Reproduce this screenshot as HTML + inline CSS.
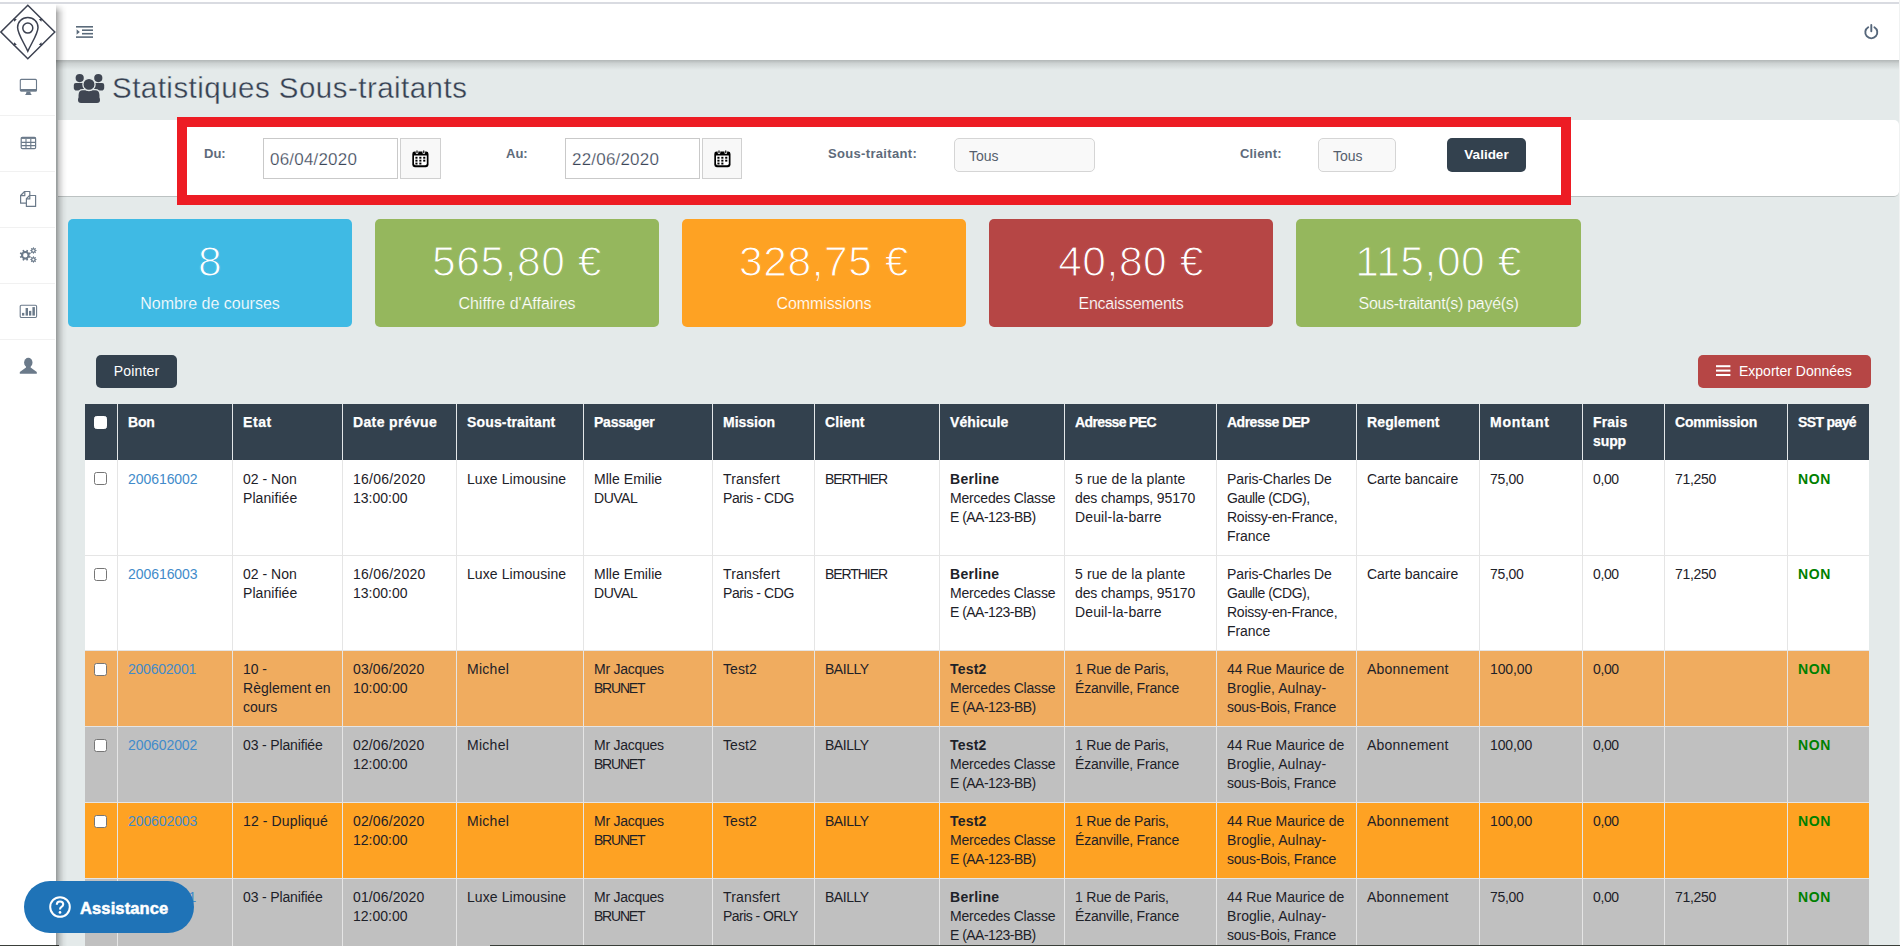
<!DOCTYPE html>
<html lang="fr">
<head>
<meta charset="utf-8">
<title>Statistiques Sous-traitants</title>
<style>
*{box-sizing:border-box;margin:0;padding:0}
html,body{width:1900px;height:946px;overflow:hidden}
body{font-family:"Liberation Sans",sans-serif;background:#e4eaea;color:#1d2128;font-size:14px;position:relative}
.abs{position:absolute}
/* top strip */
#topwhite{left:0;top:0;width:1900px;height:3px;background:#fff}
#topline{left:0;top:2px;width:1900px;height:2px;background:#d9dbe1}
/* topbar */
#topbar{left:56px;top:3px;width:1843px;height:57px;background:#fff}
#topshadow{left:56px;top:60px;width:1843px;height:10px;background:linear-gradient(to bottom,rgba(0,0,0,.22),rgba(0,0,0,.10) 35%,rgba(0,0,0,0))}
/* sidebar */
#sidebar{left:0;top:3px;width:56px;height:943px;background:#fff}
#sideshadow{z-index:5;left:56px;top:4px;width:11px;height:942px;-webkit-mask-image:linear-gradient(to bottom,transparent 0,#000 9px);mask-image:linear-gradient(to bottom,transparent 0,#000 9px);background:linear-gradient(to right,rgba(0,0,0,.34),rgba(0,0,0,.16) 35%,rgba(0,0,0,.04) 70%,rgba(0,0,0,0))}
.sdiv{left:0;width:55px;height:1px;background:#f1f1f1}
#rightstrip{left:1899px;top:0;width:1px;height:946px;background:#f0f2f2}
/* title */
#title{left:112px;top:68px;font-size:29.5px;line-height:40px;color:#364152;white-space:nowrap;letter-spacing:.47px;-webkit-text-stroke:.35px #e4eaea}
/* filter panel */
#panel{left:58px;top:120px;width:1841px;height:77px;background:#fff;border-radius:0 5px 5px 0;border-bottom:1px solid #bcc2c2}
#red{left:177px;top:117px;width:1394px;height:88px;border:10px solid #ed1c24}
.flabel{font-weight:bold;font-size:13px;color:#5e6b7b;line-height:16px;white-space:nowrap}
.dinput{height:41px;width:135px;border:1px solid #c9c9c9;background:#fff;top:138px}
.dinput span{position:absolute;left:6px;top:10px;font-size:17px;line-height:22px;color:#3b4658;-webkit-text-stroke:.25px #fff;white-space:nowrap;letter-spacing:.2px}
.calbtn{top:138px;width:41px;height:41px;border:1px solid #d0d0d0;background:#f8f8f8}
.sel{top:138px;height:34px;border:1px solid #d5d5d5;border-radius:5px;background:#f9f9f9}
.sel span{position:absolute;left:14px;top:8px;font-size:14px;line-height:18px;color:#555f6d}
.btn{border-radius:5px;color:#fff;font-size:14px;white-space:nowrap}
/* cards */
.card{position:absolute;top:219px;height:108px;border-radius:5px;color:#fff;text-align:center}
.card .num{position:absolute;left:0;right:0;top:19px;font-size:42.5px;line-height:48px;-webkit-text-stroke:1.1px #000;white-space:nowrap;letter-spacing:.55px}
.card .lbl{position:absolute;left:0;right:0;top:75px;font-size:16px;line-height:20px;-webkit-text-stroke:.2px #000;white-space:nowrap}
/* table */
#tbl{left:85px;top:404px;width:1784px;border-collapse:separate;border-spacing:0;table-layout:fixed;font-size:14px;line-height:19px}
#tbl th{background:#33414e;color:#fff;font-weight:bold;-webkit-text-stroke:.25px #fff;text-align:left;vertical-align:top;padding:9px 4px 0 10px;border-left:1px solid #e3e6e8;white-space:nowrap;overflow:hidden}
#tbl td{vertical-align:top;padding:9px 0 0 10px;border-left:1px solid #e5e5e5;border-top:1px solid #e5e5e5;white-space:nowrap;overflow:hidden}
#tbl th.cb,#tbl td.cb{border-left:none;padding:0;position:relative}
#tbl tbody tr:first-child td{border-top:none;padding-top:10px}
tr.w td{background:#fff}
tr.o1 td{background:#f0ac5f}
tr.g td{background:#c0c0c0}
tr.o2 td{background:#fea223}
#tbl a{color:#428bca}
.non{color:#008000;font-weight:bold}
.chk{position:absolute;left:9px;top:12px;width:13px;height:13px;border:1px solid #767676;border-radius:2.5px;background:#fff}
.chk.h{border-color:#fff;top:11.6px;left:9.4px}
/* assistance */
#assist{z-index:10;left:24px;top:881px;width:170px;height:52px;border-radius:26px;background:#1f73b7}
#assist span{position:absolute;left:56px;top:17px;letter-spacing:.12px;font-size:16.5px;line-height:20px;font-weight:bold;color:#fff;-webkit-text-stroke:.5px #fff}
.bl{top:945px;height:1px;background:#3a3f3a}
</style>
</head>
<body>
<div class="abs" id="topwhite"></div>
<div class="abs" id="topbar"></div>
<div class="abs" id="topshadow"></div>
<div class="abs" id="sidebar"></div>
<div class="abs" id="sideshadow"></div>
<div class="abs" id="topline"></div>
<div class="abs" id="rightstrip"></div>

<!-- logo -->
<svg class="abs" style="left:0;top:4px" width="56" height="56" viewBox="0 0 56 56">
 <g fill="none" stroke="#3c4150" stroke-width="1.5" stroke-linejoin="miter">
  <path d="M27.8 1.2 L54.8 28 L27.8 54.8 L0.9 28 Z"/>
  <path d="M27.8 13.6 C21.8 13.6 17.6 18 17.6 23.4 C17.6 29.5 23.8 38.5 27.8 47.2 C31.8 38.5 38 29.5 38 23.4 C38 18 33.8 13.6 27.8 13.6 Z"/>
  <circle cx="27.8" cy="24.1" r="5"/>
 </g>
 <g fill="#3c4150">
  <path d="M13.4 14.4 l3.4 0.9 l-2.5 2.5 z"/>
  <path d="M42.2 14.4 l-3.4 0.9 l2.5 2.5 z"/>
  <path d="M13.4 41.6 l3.4 -0.9 l-2.5 -2.5 z"/>
  <path d="M42.2 41.6 l-3.4 -0.9 l2.5 -2.5 z"/>
 </g>
</svg>

<!-- hamburger -->
<svg class="abs" style="left:76px;top:26px" width="17" height="12" viewBox="0 0 17 12">
 <g fill="#5a6a7a">
  <rect x="0" y="0" width="17" height="1.6"/>
  <rect x="6" y="3.4" width="11" height="1.6"/>
  <rect x="6" y="6.9" width="11" height="1.6"/>
  <rect x="0" y="10.3" width="17" height="1.6"/>
  <path d="M0.6 3.2 L3.8 6 L0.6 8.8 Z"/>
 </g>
</svg>

<!-- power -->
<svg class="abs" style="left:1863px;top:23px" width="17" height="18" viewBox="0 0 17 18">
 <g fill="none" stroke="#56677b" stroke-width="1.9" stroke-linecap="round">
  <path d="M5.2 4.2 A6 6 0 1 0 11.4 4.2"/>
  <path d="M8.3 2 V8.2"/>
 </g>
</svg>

<!-- sidebar icons -->
<div class="abs sdiv" style="top:115px"></div>
<div class="abs sdiv" style="top:171px"></div>
<div class="abs sdiv" style="top:227px"></div>
<div class="abs sdiv" style="top:283px"></div>
<div class="abs sdiv" style="top:339px"></div>

<!-- desktop -->
<svg class="abs" style="left:19px;top:78px" width="19" height="18" viewBox="0 0 19 18">
 <rect x="1.3" y="1.4" width="16.2" height="11.6" rx="1" fill="none" stroke="#6b7a8a" stroke-width="1.1"/>
 <rect x="1.3" y="11" width="16.2" height="2.4" fill="#6b7a8a"/>
 <path d="M7.6 13.4 H11.2 L12 16.6 H6.8 Z" fill="#6b7a8a"/>
 <rect x="6.4" y="16" width="6" height="1" fill="#6b7a8a"/>
</svg>
<!-- table -->
<svg class="abs" style="left:20px;top:136px" width="17" height="14" viewBox="0 0 17 14">
 <rect x="1.2" y="1.3" width="14.4" height="11.4" rx="1.2" fill="none" stroke="#6b7a8a" stroke-width="1.2"/>
 <rect x="1.2" y="1.3" width="14.4" height="1.6" fill="#6b7a8a"/>
 <path d="M1.2 6.4 H15.6 M1.2 9.6 H15.6 M6 3 V12.7 M10.8 3 V12.7" stroke="#6b7a8a" stroke-width="1.1" fill="none"/>
</svg>
<!-- files -->
<svg class="abs" style="left:19px;top:190px" width="19" height="18" viewBox="0 0 19 18">
 <g fill="#fff" stroke="#6b7a8a" stroke-width="1.2" stroke-linejoin="round">
  <path d="M5.6 1.5 H10.8 V13.2 H1.6 V5.5 Z"/>
  <path d="M5.8 1.7 V5.7 H1.8" fill="none"/>
  <path d="M10.6 5.5 H16.6 V16.4 H7.4 V8.7 Z"/>
  <path d="M10.8 5.7 V8.9 H7.6" fill="none"/>
 </g>
</svg>
<!-- cogs -->
<svg class="abs" style="left:19px;top:246px" width="19" height="18" viewBox="0 0 19 18">
 <g fill="#6b7a8a" fill-rule="evenodd">
  <path d="M10.52 10.01 L11.82 10.61 L11.20 12.11 L9.86 11.62 L8.72 12.76 L9.21 14.10 L7.71 14.72 L7.11 13.42 L5.49 13.42 L4.89 14.72 L3.39 14.10 L3.88 12.76 L2.74 11.62 L1.40 12.11 L0.78 10.61 L2.08 10.01 L2.08 8.39 L0.78 7.79 L1.40 6.29 L2.74 6.78 L3.88 5.64 L3.39 4.30 L4.89 3.68 L5.49 4.98 L7.11 4.98 L7.71 3.68 L9.21 4.30 L8.72 5.64 L9.86 6.78 L11.20 6.29 L11.82 7.79 L10.52 8.39 Z M4.10 9.20 a2.20 2.20 0 1 0 4.40 0 a2.20 2.20 0 1 0 -4.40 0 Z"/>
  <path d="M16.75 4.13 L17.67 4.15 L17.67 5.05 L16.75 5.07 L16.40 5.93 L17.03 6.59 L16.39 7.23 L15.73 6.60 L14.87 6.95 L14.85 7.87 L13.95 7.87 L13.93 6.95 L13.07 6.60 L12.41 7.23 L11.77 6.59 L12.40 5.93 L12.05 5.07 L11.13 5.05 L11.13 4.15 L12.05 4.13 L12.40 3.27 L11.77 2.61 L12.41 1.97 L13.07 2.60 L13.93 2.25 L13.95 1.33 L14.85 1.33 L14.87 2.25 L15.73 2.60 L16.39 1.97 L17.03 2.61 L16.40 3.27 Z M13.30 4.60 a1.10 1.10 0 1 0 2.20 0 a1.10 1.10 0 1 0 -2.20 0 Z"/>
  <path d="M16.75 13.13 L17.67 13.15 L17.67 14.05 L16.75 14.07 L16.40 14.93 L17.03 15.59 L16.39 16.23 L15.73 15.60 L14.87 15.95 L14.85 16.87 L13.95 16.87 L13.93 15.95 L13.07 15.60 L12.41 16.23 L11.77 15.59 L12.40 14.93 L12.05 14.07 L11.13 14.05 L11.13 13.15 L12.05 13.13 L12.40 12.27 L11.77 11.61 L12.41 10.97 L13.07 11.60 L13.93 11.25 L13.95 10.33 L14.85 10.33 L14.87 11.25 L15.73 11.60 L16.39 10.97 L17.03 11.61 L16.40 12.27 Z M13.30 13.60 a1.10 1.10 0 1 0 2.20 0 a1.10 1.10 0 1 0 -2.20 0 Z"/>
 </g>
</svg>
<!-- bar chart -->
<svg class="abs" style="left:19px;top:304px" width="19" height="15" viewBox="0 0 19 15">
 <rect x="1.2" y="1.3" width="16.4" height="12.2" rx="1.2" fill="none" stroke="#6b7a8a" stroke-width="1.1"/>
 <g fill="#6b7a8a">
  <rect x="3" y="8.9" width="2.3" height="2.7"/>
  <rect x="6.6" y="4" width="2.4" height="7.6"/>
  <rect x="10" y="6.9" width="2.3" height="4.7"/>
  <rect x="13.4" y="3.1" width="2.5" height="8.5"/>
 </g>
</svg>
<!-- user -->
<svg class="abs" style="left:19px;top:357px" width="19" height="18" viewBox="0 0 19 18">
 <g fill="#6b7a8a">
  <ellipse cx="9.3" cy="5.6" rx="4.2" ry="4.9"/>
  <path d="M7 8.6 H11.6 V10.6 L17.8 14.9 V16.8 H0.8 V14.9 L7 10.6 Z"/>
 </g>
</svg>

<!-- title -->
<svg class="abs" style="left:73px;top:73px" width="32" height="31" viewBox="0 0 32 31">
 <g fill="#3f4652">
  <circle cx="6.7" cy="5.1" r="4.1"/>
  <circle cx="25.3" cy="5.1" r="4.1"/>
  <path d="M0.8 12 Q0.8 10 2.8 10 H11 V17.6 H3.6 Q0.8 17.6 0.8 14.8 Z"/>
  <path d="M31.2 12 Q31.2 10 29.2 10 H21 V17.6 H28.4 Q31.2 17.6 31.2 14.8 Z"/>
  <path d="M5 22 Q5 16.6 9.8 16.6 H22.2 Q27 16.6 27 22 V25.6 Q27 29.8 22.8 29.8 H9.2 Q5 29.8 5 25.6 Z" stroke="#e4eaea" stroke-width="1.1"/>
  <rect x="5" y="24" width="22" height="6" rx="3" />
  <circle cx="16" cy="11.4" r="6.1" stroke="#e4eaea" stroke-width="1.3"/>
 </g>
</svg>
<div class="abs" id="title">Statistiques Sous-traitants</div>

<!-- filter panel -->
<div class="abs" id="panel"></div>
<div class="abs flabel" style="left:204px;top:146px">Du:</div>
<div class="abs dinput" style="left:263px"><span>06/04/2020</span></div>
<div class="abs calbtn" style="left:400px"><svg class="abs" style="left:10px;top:10px" width="18" height="19" viewBox="0 0 18 19"><rect x="1.3" y="2.6" width="16.2" height="15.6" rx="2.4" fill="#000"/>
   <path d="M3 6.6 H15.8 V14.6 Q15.8 16.2 14.2 16.2 H4.6 Q3 16.2 3 14.6 Z" fill="#fff"/>
   <rect x="4.7" y="0.9" width="2.6" height="4" rx="1.2" fill="#fff"/>
   <rect x="11.5" y="0.9" width="2.6" height="4" rx="1.2" fill="#fff"/>
   <rect x="5.4" y="1.3" width="1.2" height="3" rx=".6" fill="#000"/>
   <rect x="12.2" y="1.3" width="1.2" height="3" rx=".6" fill="#000"/>
   <g fill="#000">
    <rect x="4.4" y="7.8" width="2.1" height="1.9"/><rect x="8.3" y="7.8" width="2.1" height="1.9"/><rect x="12.2" y="7.8" width="2.1" height="1.9"/>
    <rect x="4.4" y="10.7" width="2.1" height="1.9"/><rect x="8.3" y="10.7" width="2.1" height="1.9"/><rect x="12.2" y="10.7" width="2.1" height="1.9"/>
    <rect x="4.4" y="13.6" width="2.1" height="1.9"/><rect x="8.3" y="13.6" width="2.1" height="1.9"/>
   </g></svg></div>
<div class="abs flabel" style="left:506px;top:146px">Au:</div>
<div class="abs dinput" style="left:565px"><span>22/06/2020</span></div>
<div class="abs calbtn" style="left:702px;width:40px"><svg class="abs" style="left:10px;top:10px" width="18" height="19" viewBox="0 0 18 19"><rect x="1.3" y="2.6" width="16.2" height="15.6" rx="2.4" fill="#000"/>
   <path d="M3 6.6 H15.8 V14.6 Q15.8 16.2 14.2 16.2 H4.6 Q3 16.2 3 14.6 Z" fill="#fff"/>
   <rect x="4.7" y="0.9" width="2.6" height="4" rx="1.2" fill="#fff"/>
   <rect x="11.5" y="0.9" width="2.6" height="4" rx="1.2" fill="#fff"/>
   <rect x="5.4" y="1.3" width="1.2" height="3" rx=".6" fill="#000"/>
   <rect x="12.2" y="1.3" width="1.2" height="3" rx=".6" fill="#000"/>
   <g fill="#000">
    <rect x="4.4" y="7.8" width="2.1" height="1.9"/><rect x="8.3" y="7.8" width="2.1" height="1.9"/><rect x="12.2" y="7.8" width="2.1" height="1.9"/>
    <rect x="4.4" y="10.7" width="2.1" height="1.9"/><rect x="8.3" y="10.7" width="2.1" height="1.9"/><rect x="12.2" y="10.7" width="2.1" height="1.9"/>
    <rect x="4.4" y="13.6" width="2.1" height="1.9"/><rect x="8.3" y="13.6" width="2.1" height="1.9"/>
   </g></svg></div>
<div class="abs flabel" style="left:828px;top:146px;letter-spacing:.33px">Sous-traitant:</div>
<div class="abs sel" style="left:954px;width:141px"><span>Tous</span></div>
<div class="abs flabel" style="left:1240px;top:146px;letter-spacing:.18px">Client:</div>
<div class="abs sel" style="left:1318px;width:78px"><span>Tous</span></div>
<div class="abs btn" style="left:1447px;top:138px;width:79px;height:34px;background:#33414e;text-align:center;line-height:33px;font-weight:bold;font-size:13.5px">Valider</div>
<div class="abs" id="red"></div>


<!-- cards -->
<div class="card" style="left:68px;width:284px;background:#3fbae4"><div class="num" style="-webkit-text-stroke-color:#3fbae4">8</div><div class="lbl" style="-webkit-text-stroke-color:#3fbae4;letter-spacing:0px">Nombre de courses</div></div>
<div class="card" style="left:375px;width:284px;background:#95b75d"><div class="num" style="-webkit-text-stroke-color:#95b75d">565,80 €</div><div class="lbl" style="-webkit-text-stroke-color:#95b75d;letter-spacing:0px">Chiffre d'Affaires</div></div>
<div class="card" style="left:682px;width:284px;background:#fea223"><div class="num" style="-webkit-text-stroke-color:#fea223">328,75 €</div><div class="lbl" style="-webkit-text-stroke-color:#fea223;letter-spacing:-0.1px">Commissions</div></div>
<div class="card" style="left:989px;width:284px;background:#b64645"><div class="num" style="-webkit-text-stroke-color:#b64645">40,80 €</div><div class="lbl" style="-webkit-text-stroke-color:#b64645;letter-spacing:-0.28px">Encaissements</div></div>
<div class="card" style="left:1296px;width:285px;background:#95b75d"><div class="num" style="-webkit-text-stroke-color:#95b75d">115,00 €</div><div class="lbl" style="-webkit-text-stroke-color:#95b75d;letter-spacing:-0.3px">Sous-traitant(s) payé(s)</div></div>

<!-- buttons -->
<div class="abs btn" style="left:96px;top:355px;width:81px;height:33px;background:#33414e;text-align:center;line-height:32px;letter-spacing:.15px">Pointer</div>
<div class="abs btn" style="left:1698px;top:355px;width:173px;height:33px;background:#b64645;line-height:32px">
 <svg class="abs" style="left:18px;top:10px" width="15" height="12" viewBox="0 0 15 12"><g fill="#fff"><rect x="0" y="0.2" width="14.4" height="2"/><rect x="0" y="4.6" width="14.4" height="2"/><rect x="0" y="9" width="14.4" height="2"/></g></svg>
 <span class="abs" style="left:41px;top:0">Exporter Données</span>
</div>

<!-- table -->
<table class="abs" id="tbl">
<colgroup><col style="width:32px"><col style="width:115px"><col style="width:110px"><col style="width:114px"><col style="width:127px"><col style="width:129px"><col style="width:102px"><col style="width:125px"><col style="width:125px"><col style="width:152px"><col style="width:140px"><col style="width:123px"><col style="width:103px"><col style="width:82px"><col style="width:123px"><col style="width:82px"></colgroup>
<thead><tr style="height:56px"><th class="cb"><span class="chk h"></span></th><th><span style="letter-spacing:-0.15px">Bon</span></th><th><span style="letter-spacing:0.6px">Etat</span></th><th><span style="letter-spacing:0.36px">Date prévue</span></th><th><span style="letter-spacing:0.16px">Sous-traitant</span></th><th><span style="letter-spacing:-0.23px">Passager</span></th><th><span>Mission</span></th><th><span style="letter-spacing:0.12px">Client</span></th><th><span style="letter-spacing:0.1px">Véhicule</span></th><th><span style="letter-spacing:-0.63px">Adresse PEC</span></th><th><span style="letter-spacing:-0.5px">Adresse DEP</span></th><th><span style="letter-spacing:0.12px">Reglement</span></th><th><span style="letter-spacing:0.75px">Montant</span></th><th><span style="letter-spacing:0.18px">Frais</span><br><span style="letter-spacing:-0.1px">supp</span></th><th><span style="letter-spacing:-0.2px">Commission</span></th><th><span style="letter-spacing:-0.63px">SST payé</span></th></tr></thead>
<tbody>
<tr class="w" style="height:95px"><td class="cb"><span class="chk"></span></td><td><a><span style="letter-spacing:-0.06px">200616002</span></a></td><td><span style="letter-spacing:0.01px">02 - Non</span><br><span style="letter-spacing:0.06px">Planifiée</span></td><td><span style="letter-spacing:0.24px">16/06/2020</span><br><span style="letter-spacing:0.01px">13:00:00</span></td><td><span style="letter-spacing:0.08px">Luxe Limousine</span></td><td><span style="letter-spacing:0.04px">Mlle Emilie</span><br><span style="letter-spacing:-0.47px">DUVAL</span></td><td><span style="letter-spacing:0.16px">Transfert</span><br><span style="letter-spacing:-0.41px">Paris - CDG</span></td><td><span style="letter-spacing:-1.07px">BERTHIER</span></td><td><b style="letter-spacing:0.27px">Berline</b><br><span style="letter-spacing:-0.19px">Mercedes Classe</span><br><span style="letter-spacing:-0.53px">E (AA-123-BB)</span></td><td><span style="letter-spacing:0.12px">5 rue de la plante</span><br><span style="letter-spacing:-0.12px">des champs, 95170</span><br><span style="letter-spacing:0.14px">Deuil-la-barre</span></td><td><span style="letter-spacing:-0.12px">Paris-Charles De</span><br><span style="letter-spacing:-0.46px">Gaulle (CDG),</span><br><span style="letter-spacing:-0.24px">Roissy-en-France,</span><br><span style="letter-spacing:-0.06px">France</span></td><td><span style="letter-spacing:-0.05px">Carte bancaire</span></td><td><span style="letter-spacing:-0.32px">75,00</span></td><td><span style="letter-spacing:-0.37px">0,00</span></td><td><span style="letter-spacing:-0.3px">71,250</span></td><td class="non"><span style="letter-spacing:0.6px">NON</span></td></tr>
<tr class="w" style="height:95px"><td class="cb"><span class="chk"></span></td><td><a><span style="letter-spacing:-0.06px">200616003</span></a></td><td><span style="letter-spacing:0.01px">02 - Non</span><br><span style="letter-spacing:0.06px">Planifiée</span></td><td><span style="letter-spacing:0.24px">16/06/2020</span><br><span style="letter-spacing:0.01px">13:00:00</span></td><td><span style="letter-spacing:0.08px">Luxe Limousine</span></td><td><span style="letter-spacing:0.04px">Mlle Emilie</span><br><span style="letter-spacing:-0.47px">DUVAL</span></td><td><span style="letter-spacing:0.16px">Transfert</span><br><span style="letter-spacing:-0.41px">Paris - CDG</span></td><td><span style="letter-spacing:-1.07px">BERTHIER</span></td><td><b style="letter-spacing:0.27px">Berline</b><br><span style="letter-spacing:-0.19px">Mercedes Classe</span><br><span style="letter-spacing:-0.53px">E (AA-123-BB)</span></td><td><span style="letter-spacing:0.12px">5 rue de la plante</span><br><span style="letter-spacing:-0.12px">des champs, 95170</span><br><span style="letter-spacing:0.14px">Deuil-la-barre</span></td><td><span style="letter-spacing:-0.12px">Paris-Charles De</span><br><span style="letter-spacing:-0.46px">Gaulle (CDG),</span><br><span style="letter-spacing:-0.24px">Roissy-en-France,</span><br><span style="letter-spacing:-0.06px">France</span></td><td><span style="letter-spacing:-0.05px">Carte bancaire</span></td><td><span style="letter-spacing:-0.32px">75,00</span></td><td><span style="letter-spacing:-0.37px">0,00</span></td><td><span style="letter-spacing:-0.3px">71,250</span></td><td class="non"><span style="letter-spacing:0.6px">NON</span></td></tr>
<tr class="o1" style="height:76px"><td class="cb"><span class="chk"></span></td><td><a><span style="letter-spacing:-0.23px">200602001</span></a></td><td><span style="letter-spacing:-0.07px">10 -</span><br><span style="letter-spacing:0.04px">Règlement en</span><br><span style="letter-spacing:0.02px">cours</span></td><td><span style="letter-spacing:0.13px">03/06/2020</span><br><span style="letter-spacing:0.01px">10:00:00</span></td><td><span style="letter-spacing:0.28px">Michel</span></td><td><span style="letter-spacing:-0.27px">Mr Jacques</span><br><span style="letter-spacing:-1.22px">BRUNET</span></td><td><span style="letter-spacing:0.05px">Test2</span></td><td><span style="letter-spacing:-0.48px">BAILLY</span></td><td><b style="letter-spacing:0.2px">Test2</b><br><span style="letter-spacing:-0.19px">Mercedes Classe</span><br><span style="letter-spacing:-0.53px">E (AA-123-BB)</span></td><td><span style="letter-spacing:-0.19px">1 Rue de Paris,</span><br><span style="letter-spacing:-0.2px">Ézanville, France</span></td><td><span style="letter-spacing:-0.06px">44 Rue Maurice de</span><br><span style="letter-spacing:0.07px">Broglie, Aulnay-</span><br><span style="letter-spacing:-0.22px">sous-Bois, France</span></td><td><span style="letter-spacing:0.23px">Abonnement</span></td><td><span style="letter-spacing:-0.12px">100,00</span></td><td><span style="letter-spacing:-0.37px">0,00</span></td><td></td><td class="non"><span style="letter-spacing:0.6px">NON</span></td></tr>
<tr class="g" style="height:76px"><td class="cb"><span class="chk"></span></td><td><a><span style="letter-spacing:-0.09px">200602002</span></a></td><td><span style="letter-spacing:-0.15px">03 - Planifiée</span></td><td><span style="letter-spacing:0.13px">02/06/2020</span><br><span style="letter-spacing:0.01px">12:00:00</span></td><td><span style="letter-spacing:0.28px">Michel</span></td><td><span style="letter-spacing:-0.27px">Mr Jacques</span><br><span style="letter-spacing:-1.22px">BRUNET</span></td><td><span style="letter-spacing:0.05px">Test2</span></td><td><span style="letter-spacing:-0.48px">BAILLY</span></td><td><b style="letter-spacing:0.2px">Test2</b><br><span style="letter-spacing:-0.19px">Mercedes Classe</span><br><span style="letter-spacing:-0.53px">E (AA-123-BB)</span></td><td><span style="letter-spacing:-0.19px">1 Rue de Paris,</span><br><span style="letter-spacing:-0.2px">Ézanville, France</span></td><td><span style="letter-spacing:-0.06px">44 Rue Maurice de</span><br><span style="letter-spacing:0.07px">Broglie, Aulnay-</span><br><span style="letter-spacing:-0.22px">sous-Bois, France</span></td><td><span style="letter-spacing:0.23px">Abonnement</span></td><td><span style="letter-spacing:-0.12px">100,00</span></td><td><span style="letter-spacing:-0.37px">0,00</span></td><td></td><td class="non"><span style="letter-spacing:0.6px">NON</span></td></tr>
<tr class="o2" style="height:76px"><td class="cb"><span class="chk"></span></td><td><a><span style="letter-spacing:-0.09px">200602003</span></a></td><td><span style="letter-spacing:0.12px">12 - Dupliqué</span></td><td><span style="letter-spacing:0.13px">02/06/2020</span><br><span style="letter-spacing:0.01px">12:00:00</span></td><td><span style="letter-spacing:0.28px">Michel</span></td><td><span style="letter-spacing:-0.27px">Mr Jacques</span><br><span style="letter-spacing:-1.22px">BRUNET</span></td><td><span style="letter-spacing:0.05px">Test2</span></td><td><span style="letter-spacing:-0.48px">BAILLY</span></td><td><b style="letter-spacing:0.2px">Test2</b><br><span style="letter-spacing:-0.19px">Mercedes Classe</span><br><span style="letter-spacing:-0.53px">E (AA-123-BB)</span></td><td><span style="letter-spacing:-0.19px">1 Rue de Paris,</span><br><span style="letter-spacing:-0.2px">Ézanville, France</span></td><td><span style="letter-spacing:-0.06px">44 Rue Maurice de</span><br><span style="letter-spacing:0.07px">Broglie, Aulnay-</span><br><span style="letter-spacing:-0.22px">sous-Bois, France</span></td><td><span style="letter-spacing:0.23px">Abonnement</span></td><td><span style="letter-spacing:-0.12px">100,00</span></td><td><span style="letter-spacing:-0.37px">0,00</span></td><td></td><td class="non"><span style="letter-spacing:0.6px">NON</span></td></tr>
<tr class="g" style="height:76px"><td class="cb"><span class="chk"></span></td><td><a><span style="letter-spacing:-0.23px">200601001</span></a></td><td><span style="letter-spacing:-0.15px">03 - Planifiée</span></td><td><span style="letter-spacing:0.13px">01/06/2020</span><br><span style="letter-spacing:0.01px">12:00:00</span></td><td><span style="letter-spacing:0.08px">Luxe Limousine</span></td><td><span style="letter-spacing:-0.27px">Mr Jacques</span><br><span style="letter-spacing:-1.22px">BRUNET</span></td><td><span style="letter-spacing:0.16px">Transfert</span><br><span style="letter-spacing:-0.55px">Paris - ORLY</span></td><td><span style="letter-spacing:-0.48px">BAILLY</span></td><td><b style="letter-spacing:0.27px">Berline</b><br><span style="letter-spacing:-0.19px">Mercedes Classe</span><br><span style="letter-spacing:-0.53px">E (AA-123-BB)</span></td><td><span style="letter-spacing:-0.19px">1 Rue de Paris,</span><br><span style="letter-spacing:-0.2px">Ézanville, France</span></td><td><span style="letter-spacing:-0.06px">44 Rue Maurice de</span><br><span style="letter-spacing:0.07px">Broglie, Aulnay-</span><br><span style="letter-spacing:-0.22px">sous-Bois, France</span></td><td><span style="letter-spacing:0.23px">Abonnement</span></td><td><span style="letter-spacing:-0.32px">75,00</span></td><td><span style="letter-spacing:-0.37px">0,00</span></td><td><span style="letter-spacing:-0.3px">71,250</span></td><td class="non"><span style="letter-spacing:0.6px">NON</span></td></tr>
</tbody>
</table>

<!-- assistance -->
<div class="abs" id="assist">
 <svg class="abs" style="left:25px;top:15px" width="22" height="22" viewBox="0 0 22 22">
  <circle cx="11" cy="11" r="9.8" fill="none" stroke="#fff" stroke-width="2"/>
  <path d="M7.8 8.7 Q7.8 5.5 11 5.5 Q14.2 5.5 14.2 8.3 Q14.2 9.9 12.5 10.9 Q11 11.8 11 13.5" fill="none" stroke="#fff" stroke-width="2.1" stroke-linecap="butt"/>
  <circle cx="11" cy="16.4" r="1.35" fill="#fff"/>
 </svg>
 <span>Assistance</span>
</div>

<div class="abs bl" style="left:0;width:59px"></div>
<div class="abs bl" style="left:490px;width:1410px"></div>
</body>
</html>
